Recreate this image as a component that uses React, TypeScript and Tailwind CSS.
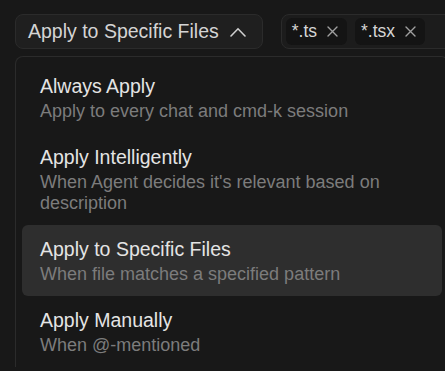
import React from "react";

const items = [
  { t: "Always Apply", d: "Apply to every chat and cmd-k session" },
  { t: "Apply Intelligently", d: "When Agent decides it's relevant based on description" },
  { t: "Apply to Specific Files", d: "When file matches a specified pattern", active: true },
  { t: "Apply Manually", d: "When @-mentioned" },
];

function X() {
  return (
    <svg width="11" height="11" viewBox="0 0 11 11" className="text-[#a0a0a0]">
      <path d="M1 1 L10 10 M10 1 L1 10" stroke="currentColor" strokeWidth="1.4" strokeLinecap="round" />
    </svg>
  );
}

function Tag({ label }: { label: string }) {
  return (
    <div className="flex items-center h-[27px] pl-[6px] pr-[9px] rounded-[6px] bg-[#141414] text-[17.5px] text-[#d6d6d6]">
      <span>{label}</span>
      <span className="ml-[10px] flex"><X /></span>
    </div>
  );
}

export default function App() {
  return (
    <div
      className="w-[445px] h-[371px] overflow-hidden bg-[#181818] pl-[15px] pt-[14px]"
      style={{ fontFamily: '"Liberation Sans", Arial, sans-serif' }}
    >
      <div className="flex items-center gap-[18px] w-[480px]">
        <div className="flex items-center h-[35px] shrink-0 pl-[12px] pr-[16px] rounded-[8px] border border-[#2b2b2b] bg-[#1f1f1f]">
          <span className="text-[19.5px] text-[#d4d4d4] whitespace-nowrap">Apply to Specific Files</span>
          <svg width="16" height="10" viewBox="0 0 16 10" className="ml-[11px] text-[#cfcfcf]">
            <path d="M1 9 L8 1.8 L15 9" stroke="currentColor" strokeWidth="1.6" fill="none" strokeLinecap="round" />
          </svg>
        </div>
        <div className="flex flex-1 items-center gap-[8px] h-[35px] pl-[4px] rounded-[8px] border border-[#2b2b2b] bg-[#1c1c1c]">
          <Tag label="*.ts" />
          <Tag label="*.tsx" />
        </div>
      </div>
      <div className="mt-[7px] w-[434px] rounded-t-[8px] border-l border-t border-r border-[#2b2b2b] pt-[5px] px-[6px]">
        {items.map((it) => (
          <div
            key={it.t}
            className={`px-[18px] pt-[11px] pb-[11px] rounded-[6px] ${it.active ? "bg-[#2e2e2e]" : ""}`}
          >
            <div className="text-[19.5px] leading-[26px] text-[#e4e4e4]">{it.t}</div>
            <div className="mt-[2px] text-[18px] leading-[21px] text-[#7c7c7c]">{it.d}</div>
          </div>
        ))}
      </div>
    </div>
  );
}
